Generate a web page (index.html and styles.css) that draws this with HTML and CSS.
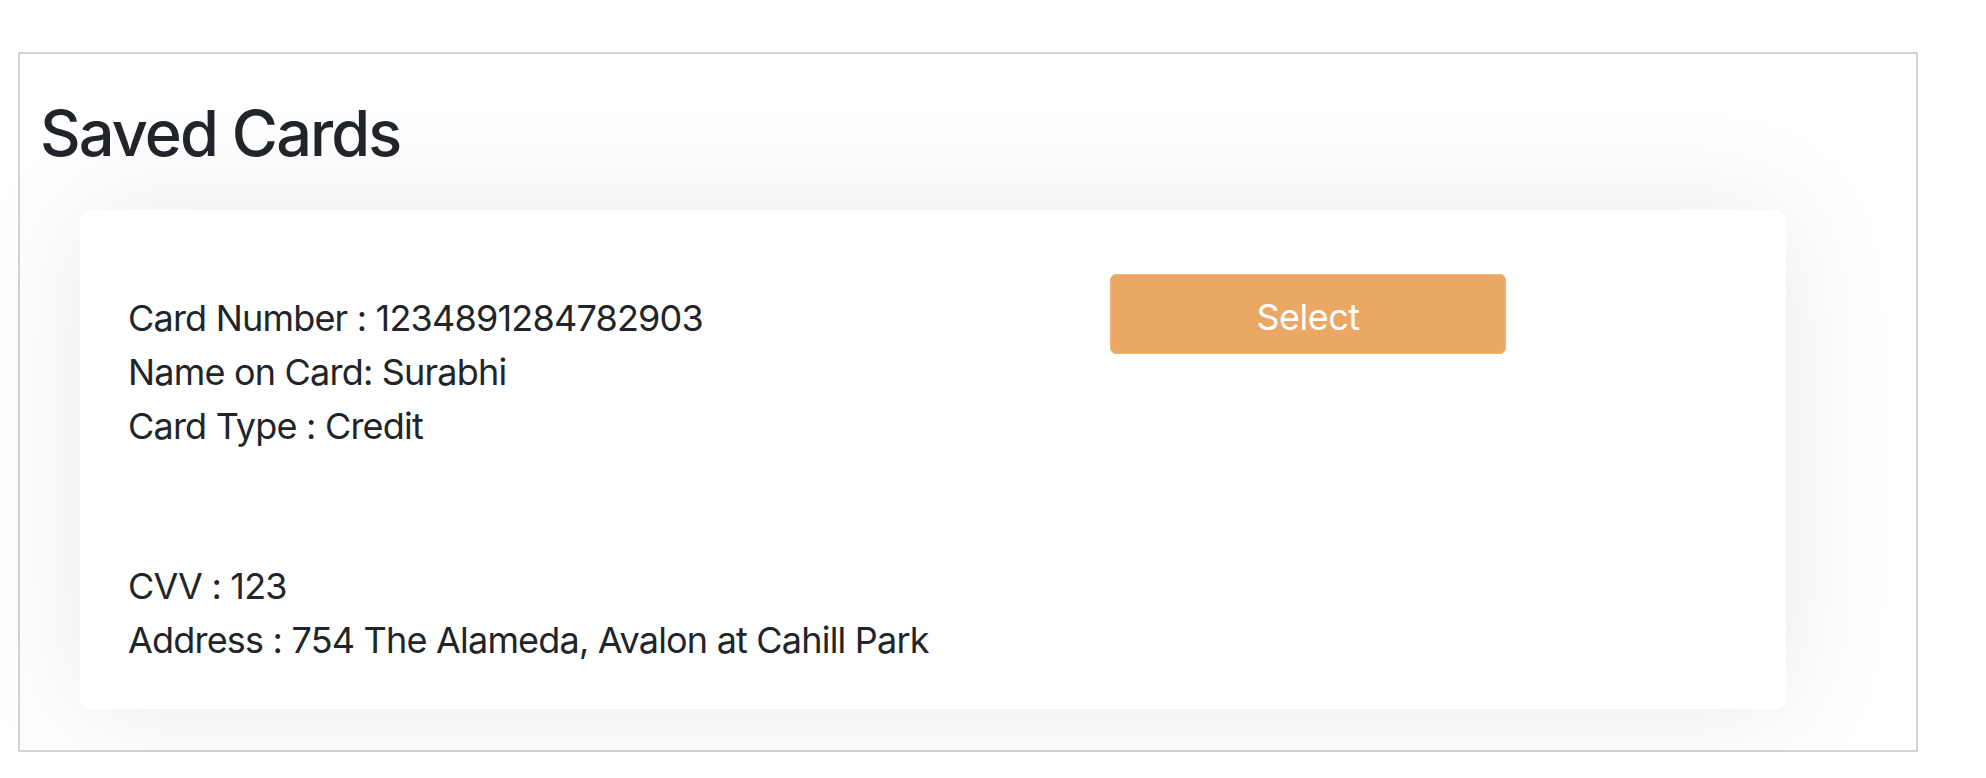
FILE: index.html
```html
<!DOCTYPE html>
<html lang="en">
<head>
<meta charset="utf-8">
<title>Saved Cards</title>
<link rel="stylesheet" href="styles.css">
</head>
<body>
<div class="page">
  <section class="panel">
    <h3 class="title">Saved Cards</h3>
    <div class="card">
      <div class="card-top">
        <div class="info">
          <div>Card Number : 1234891284782903</div>
          <div>Name on Card: Surabhi</div>
          <div>Card Type : Credit</div>
        </div>
        <button class="btn" type="button">Select</button>
      </div>
      <div class="extra">
        <div>CVV : 123</div>
        <div>Address : 754 The Alameda, Avalon at Cahill Park</div>
      </div>
    </div>
  </section>
</div>
</body>
</html>
```

FILE: styles.css
```css
html, body {
  margin: 0;
  padding: 0;
  background: #ffffff;
}

body {
  font-family: Inter, "Noto Sans", "Liberation Sans", sans-serif;
  color: #212529;
  font-size: 36px;
  line-height: 54px;
  letter-spacing: -0.8px;
}

.page {
  padding: 52px 0 0 18px;
}

.panel {
  width: 1900px;
  height: 700px;
  box-sizing: border-box;
  border: 2px solid #d4d4d4;
  padding: 42px 130px 0 20px;
}

.title {
  margin: 0 0 38px 0;
  font-size: 63px;
  line-height: 75.6px;
  font-weight: 500;
  letter-spacing: -1.9px;
  color: #212529;
}

.card {
  margin-left: 40px;
  background: #ffffff;
  border-radius: 10px;
  box-shadow: 0 0 120px rgba(0, 0, 0, 0.09);
  padding: 45px 48px 42px 48px;
}

.card-top {
  display: flex;
  align-items: flex-start;
}

.info {
  width: 982px;
  margin-top: 36px;
}

.btn {
  margin-top: 19px;
  width: 396px;
  height: 80px;
  box-sizing: border-box;
  background: #eaa864;
  border: 1px solid #edb672;
  border-radius: 6px;
  color: #ffffff;
  font-family: Inter, "Noto Sans", "Liberation Sans", sans-serif;
  font-size: 36px;
  line-height: 54px;
  letter-spacing: -0.5px;
  padding: 6px 0 0 0;
}

.extra {
  margin-top: 106px;
}
```
